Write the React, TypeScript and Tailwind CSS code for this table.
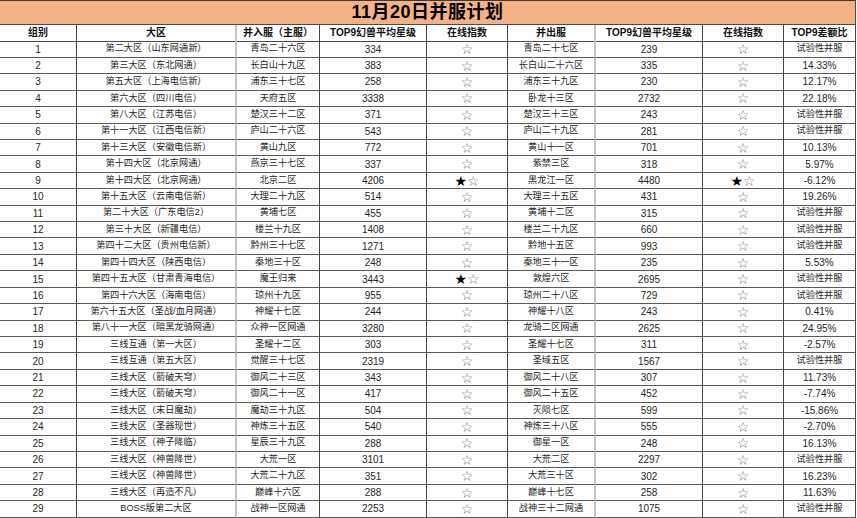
import React from "react";

type Row = [string, string, string, string, string, string, string, string];

const rows: Row[] = [
  ["第二大区（山东网通新）", "青岛二十六区", "334", "☆", "青岛二十七区", "239", "☆", "试验性并服"],
  ["第三大区（东北网通）", "长白山十九区", "383", "☆", "长白山二十六区", "335", "☆", "14.33%"],
  ["第五大区（上海电信新）", "浦东三十七区", "258", "☆", "浦东三十九区", "230", "☆", "12.17%"],
  ["第六大区（四川电信）", "天府五区", "3338", "☆", "卧龙十三区", "2732", "☆", "22.18%"],
  ["第八大区（江苏电信）", "楚汉三十二区", "371", "☆", "楚汉三十三区", "243", "☆", "试验性并服"],
  ["第十一大区（江西电信新）", "庐山二十六区", "543", "☆", "庐山二十九区", "281", "☆", "试验性并服"],
  ["第十三大区（安徽电信新）", "黄山九区", "772", "☆", "黄山十一区", "701", "☆", "10.13%"],
  ["第十四大区（北京网通）", "燕京三十七区", "337", "☆", "紫禁三区", "318", "☆", "5.97%"],
  ["第十四大区（北京网通）", "北京二区", "4206", "★☆", "黑龙江一区", "4480", "★☆", "-6.12%"],
  ["第十五大区（云南电信新）", "大理二十九区", "514", "☆", "大理三十五区", "431", "☆", "19.26%"],
  ["第二十大区（广东电信2）", "黄埔七区", "455", "☆", "黄埔十二区", "315", "☆", "试验性并服"],
  ["第三十大区（新疆电信）", "楼兰十九区", "1408", "☆", "楼兰二十九区", "660", "☆", "试验性并服"],
  ["第四十二大区（贵州电信新）", "黔州三十七区", "1271", "☆", "黔地十五区", "993", "☆", "试验性并服"],
  ["第四十四大区（陕西电信）", "秦地三十区", "248", "☆", "秦地三十一区", "235", "☆", "5.53%"],
  ["第四十五大区（甘肃青海电信）", "魔王归来", "3443", "★☆", "敦煌六区", "2695", "☆", "试验性并服"],
  ["第四十六大区（海南电信）", "琼州十九区", "955", "☆", "琼州二十八区", "729", "☆", "试验性并服"],
  ["第六十五大区（圣战/血月网通）", "神耀十七区", "244", "☆", "神耀十八区", "243", "☆", "0.41%"],
  ["第八十一大区（暗黑龙骑网通）", "众神一区网通", "3280", "☆", "龙骑二区网通", "2625", "☆", "24.95%"],
  ["三线互通（第一大区）", "圣耀十二区", "303", "☆", "圣耀十七区", "311", "☆", "-2.57%"],
  ["三线互通（第五大区）", "觉醒三十七区", "2319", "☆", "圣域五区", "1567", "☆", "试验性并服"],
  ["三线大区（箭破天穹）", "御风二十三区", "343", "☆", "御风二十八区", "307", "☆", "11.73%"],
  ["三线大区（箭破天穹）", "御风二十一区", "417", "☆", "御风二十五区", "452", "☆", "-7.74%"],
  ["三线大区（末日魔劫）", "魔劫三十九区", "504", "☆", "灭陨七区", "599", "☆", "-15.86%"],
  ["三线大区（圣器现世）", "神炼三十五区", "540", "☆", "神炼三十八区", "555", "☆", "-2.70%"],
  ["三线大区（神子降临）", "星辰三十九区", "288", "☆", "御星一区", "248", "☆", "16.13%"],
  ["三线大区（神兽降世）", "大荒一区", "3101", "☆", "大荒二区", "2297", "☆", "试验性并服"],
  ["三线大区（神兽降世）", "大荒二十九区", "351", "☆", "大荒三十区", "302", "☆", "16.23%"],
  ["三线大区（再造不凡）", "巅峰十六区", "288", "☆", "巅峰十七区", "258", "☆", "11.63%"],
  ["BOSS版第二大区", "战神一区网通", "2253", "☆", "战神三十二网通", "1075", "☆", "试验性并服"],
];

const headers = ["组别", "大区", "并入服（主服）", "TOP9幻兽平均星级", "在线指数", "并出服", "TOP9幻兽平均星级", "在线指数", "TOP9差额比"];

const font = { fontFamily: '"Liberation Sans", "Noto Sans CJK SC", sans-serif' };
const starFont = { fontFamily: '"DejaVu Sans", sans-serif' };

function borderFor(col: number) {
  if (col === 1 || col === 5) return "border-r-2 border-r-[#c4c4c4]";
  return "border-r border-r-[#4a4a4a]";
}

function Stars({ v }: { v: string }) {
  if (v === "★☆") {
    return (
      <span className="leading-[14px] text-[14px]" style={starFont}>
        <span className="text-black">★</span>
        <span className="text-[#707070]">☆</span>
      </span>
    );
  }
  return (
    <span className="leading-[14px] text-[14px] text-[#707070]" style={starFont}>
      ☆
    </span>
  );
}

const hasCJK = (s: string) => /[\u4e00-\u9fff]/.test(s);

export default function App() {
  return (
    <div className="w-[857px] h-[518px] overflow-hidden bg-white" style={font}>
      <div className="w-[856px]">
        <div className="h-[25px] bg-[#f4b183] border-t border-[#3a3a3a] border-r border-r-[#4a4a4a] border-b border-b-[#4a4a4a] flex items-center justify-center">
          <span className="text-[18px] font-bold text-black tracking-[0.5px]">11月20日并服计划</span>
        </div>
        <div className="grid grid-cols-[77px_160px_83px_107px_81px_88px_107px_81px_72px] auto-rows-[16.43px]">
          {headers.map((h, i) => (
            <div
              key={"h" + i}
              className={`h-[16.7px] flex items-center justify-center border-b border-b-[#4a4a4a] ${borderFor(i)} text-[10px] font-bold text-[#111] whitespace-nowrap`}
            >
              {h}
            </div>
          ))}
          {rows.map((r, ri) => {
            const cells = [String(ri + 1), ...r];
            return cells.map((c, ci) => {
              const isStar = ci === 4 || ci === 7;
              const size = hasCJK(c) ? "text-[9.2px]" : "text-[10px]";
              return (
                <div
                  key={ri + "-" + ci}
                  className={`flex items-center justify-center border-b border-b-[#5a5a5a] ${borderFor(ci)} whitespace-nowrap text-[#262626] ${size}`}
                >
                  {isStar ? <Stars v={c} /> : c}
                </div>
              );
            });
          })}
        </div>
      </div>
    </div>
  );
}
